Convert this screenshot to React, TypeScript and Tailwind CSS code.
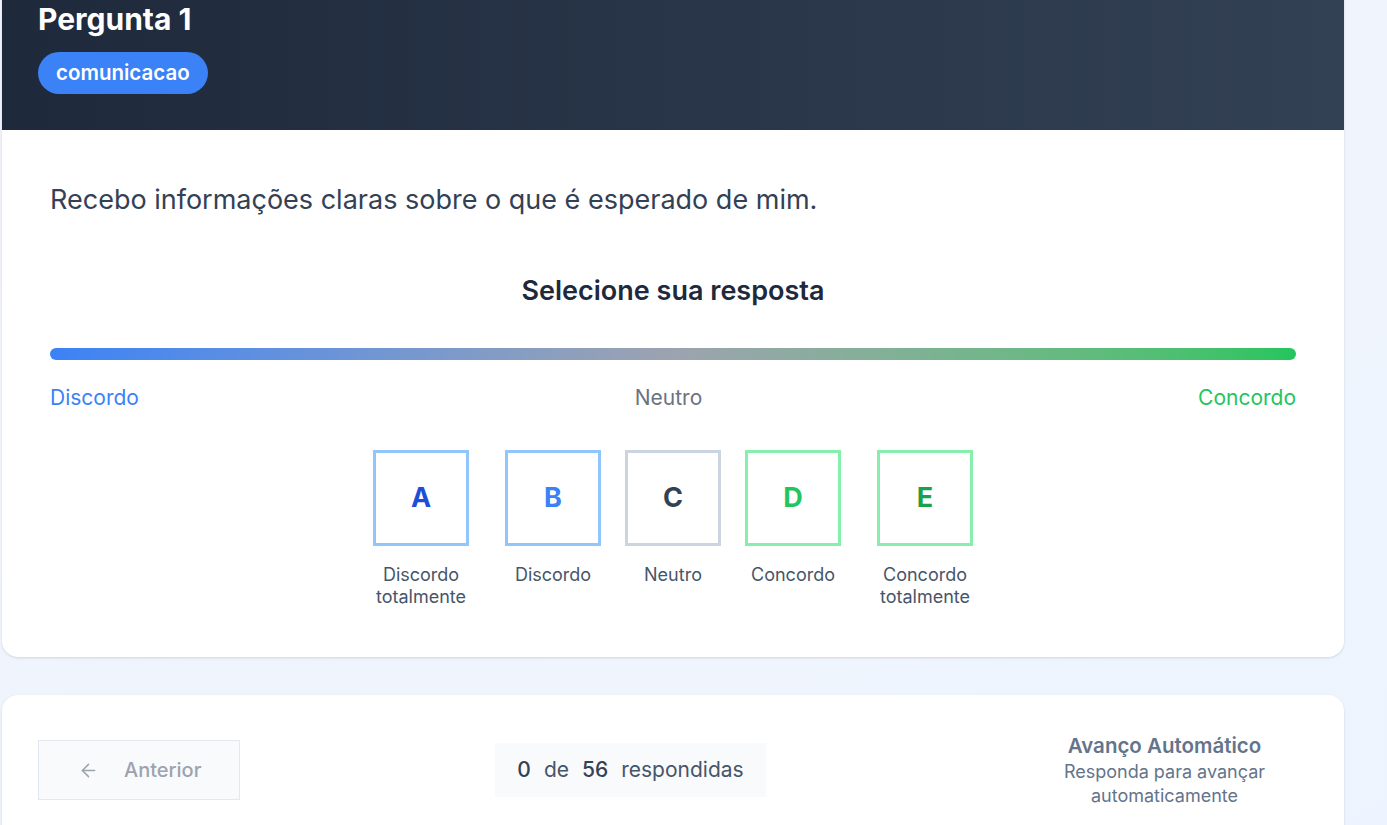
import { ArrowLeft } from "lucide-react";

const options = [
  { letter: "A", label: "Discordo totalmente", border: "border-[#93c5fd]", text: "text-[#1d4ed8]", wide: true },
  { letter: "B", label: "Discordo", border: "border-[#93c5fd]", text: "text-[#3b82f6]", wide: false },
  { letter: "C", label: "Neutro", border: "border-[#cbd5e1]", text: "text-[#334155]", wide: false },
  { letter: "D", label: "Concordo", border: "border-[#86efac]", text: "text-[#22c55e]", wide: false },
  { letter: "E", label: "Concordo totalmente", border: "border-[#86efac]", text: "text-[#16a34a]", wide: true },
];

export default function App() {
  return (
    <div
      className="min-h-screen w-full overflow-hidden bg-gradient-to-br from-[#f1f4fa] to-[#eef4ff]"
      style={{ fontFamily: "Inter, 'Noto Sans', sans-serif" }}
    >
      <div className="ml-[2px] w-[1342px]">
        {/* question card */}
        <div className="-mt-[31px] overflow-hidden rounded-2xl bg-white shadow-sm">
          <div className="bg-gradient-to-r from-[#1e293b] to-[#334155] px-9 pt-8 pb-9">
            <h2 className="text-3xl leading-9 font-bold text-white">Pergunta 1</h2>
            <span className="mt-[15px] inline-flex h-[42px] items-center rounded-full bg-[#3b82f6] px-[18px] text-[20.5px] font-semibold text-white">
              comunicacao
            </span>
          </div>

          <div className="px-12 pt-[52px] pb-[49px]">
            <p className="text-[27px] leading-9 text-[#334155]">
              Recebo informações claras sobre o que é esperado de mim.
            </p>

            <h3 className="mt-[55px] text-center text-[27px] leading-9 font-semibold text-[#1e293b]">
              Selecione sua resposta
            </h3>

            <div className="mt-[39px] h-3 w-full rounded-full bg-gradient-to-r from-[#3b82f6] via-[#9ca3af] to-[#22c55e]" />

            <div className="mt-6 flex justify-between text-[21px] leading-7">
              <span className="text-[#3b82f6]">Discordo</span>
              <span className="text-[#6b7280]">Neutro</span>
              <span className="text-[#22c55e]">Concordo</span>
            </div>

            <div className="mt-[38px] flex justify-center gap-6">
              {options.map((o) => (
                <button
                  key={o.letter}
                  className={`flex flex-col items-center ${o.wide ? "w-[120px]" : "w-24"}`}
                >
                  <span
                    className={`flex h-24 w-24 items-center justify-center border-[3px] bg-white text-[27px] font-bold ${o.border} ${o.text}`}
                  >
                    {o.letter}
                  </span>
                  <span className="mt-[18px] text-center text-lg leading-[22px] text-[#475569]">
                    {o.label}
                  </span>
                </button>
              ))}
            </div>
          </div>
        </div>

        {/* navigation card */}
        <div className="mt-[38px] rounded-2xl bg-white px-9 pt-[37px] pb-10 shadow-sm">
          <div className="flex items-center justify-between">
            <button className="flex h-[60px] w-[202px] items-center gap-[25px] border border-[#e2e8f0] bg-[#f8fafc] pl-[39px] text-xl font-medium text-[#9ca3af]">
              <ArrowLeft className="h-[21px] w-[21px]" strokeWidth={1.75} />
              Anterior
            </button>

            <div className="flex h-[54px] w-[271px] items-center justify-center bg-[#f8fafc] text-[21px] text-[#475569]">
              <span className="font-medium text-[#334155]">0</span>
              <span className="mx-[13px]">de</span>
              <span className="font-medium text-[#334155]">56</span>
              <span className="ml-[13px]">respondidas</span>
            </div>

            <div className="w-[287px] text-center">
              <div className="text-[20.5px] leading-7 font-semibold text-[#64748b]">Avanço Automático</div>
              <div className="text-lg leading-6 text-[#64748b]">
                Responda para avançar
                <br />
                automaticamente
              </div>
            </div>
          </div>
        </div>
      </div>
    </div>
  );
}
